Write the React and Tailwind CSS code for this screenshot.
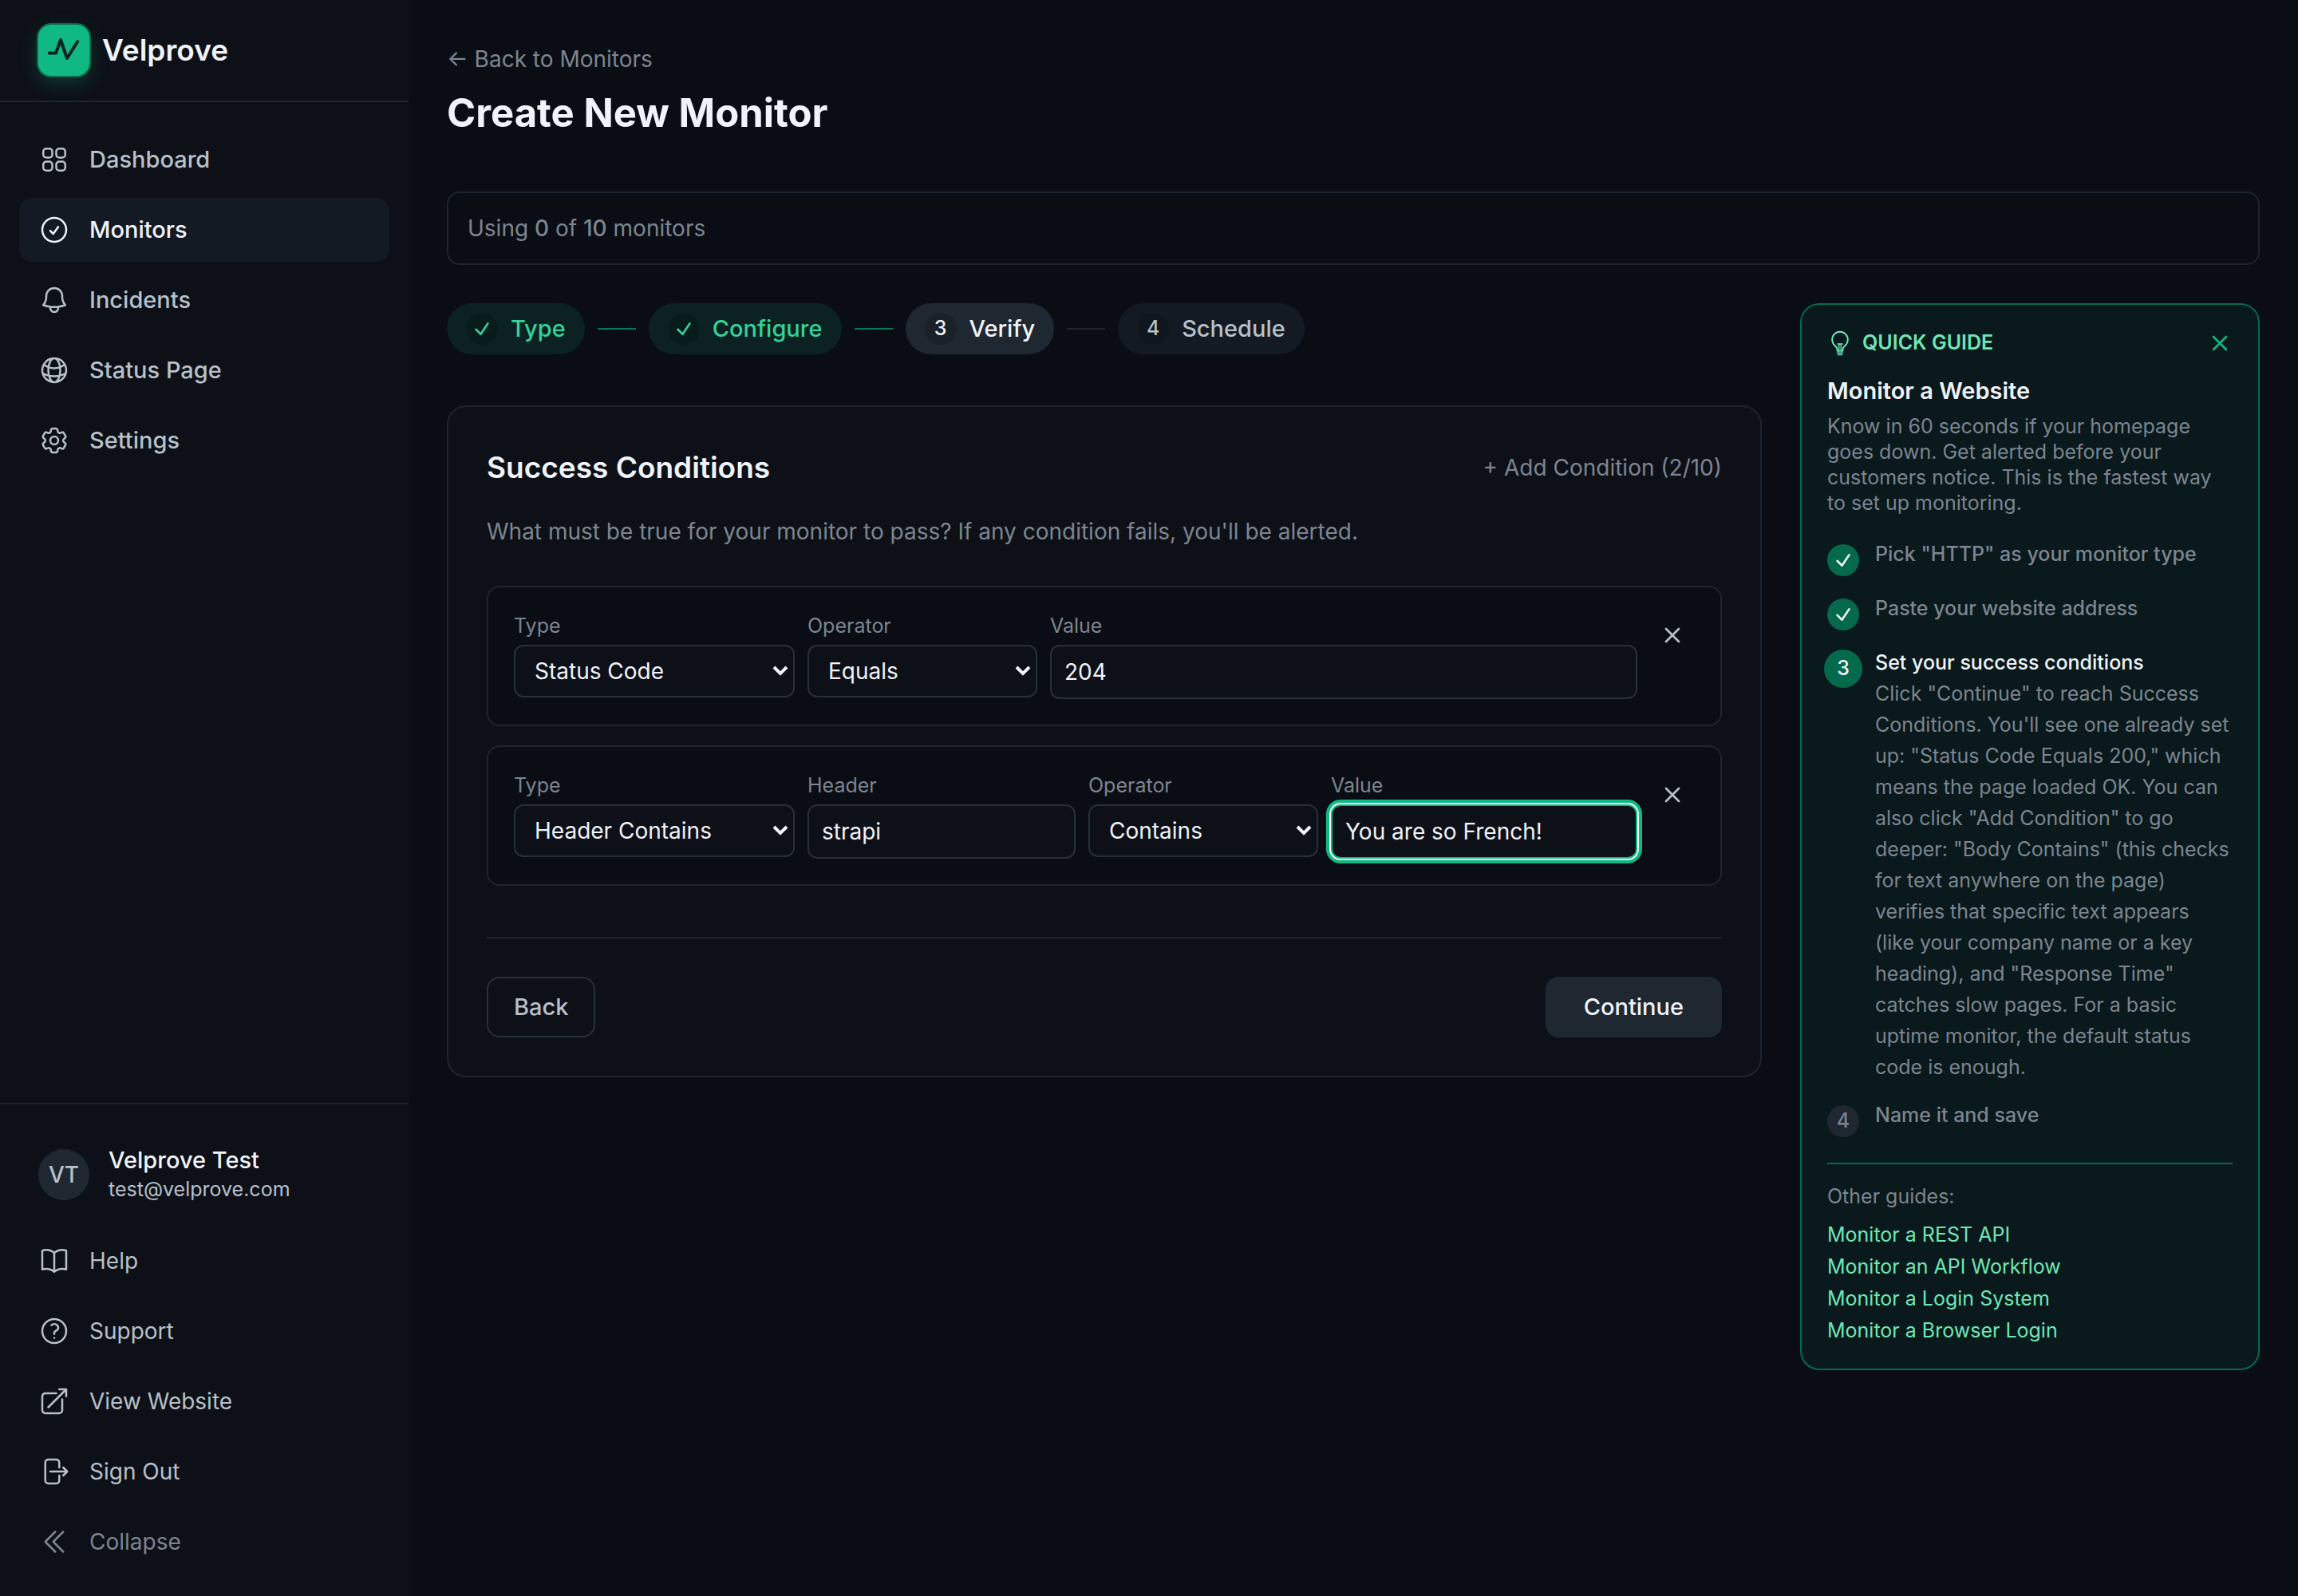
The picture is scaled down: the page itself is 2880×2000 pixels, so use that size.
import {
  HiOutlineSquares2X2, HiOutlineCheckCircle, HiOutlineBell, HiOutlineGlobeAlt, HiOutlineCog6Tooth,
  HiOutlineBookOpen, HiOutlineQuestionMarkCircle, HiOutlineArrowTopRightOnSquare,
  HiOutlineArrowRightOnRectangle, HiOutlineChevronDoubleLeft, HiOutlineXMark,
} from "react-icons/hi2";

const mainNav = [
  { label: "Dashboard", icon: HiOutlineSquares2X2 },
  { label: "Monitors", icon: HiOutlineCheckCircle, active: true },
  { label: "Incidents", icon: HiOutlineBell },
  { label: "Status Page", icon: HiOutlineGlobeAlt },
  { label: "Settings", icon: HiOutlineCog6Tooth },
];

function Check() {
  return (
    <svg viewBox="0 0 24 24" fill="none" stroke="currentColor" strokeWidth="2.5" strokeLinecap="round" strokeLinejoin="round" className="size-6" aria-hidden="true">
      <path d="M4.5 12.75l6 6 9-13.5" />
    </svg>
  );
}

function Bulb() {
  return (
    <svg viewBox="0 0 32 32" fill="none" stroke="currentColor" strokeWidth="2" strokeLinecap="round" strokeLinejoin="round" className="size-8 text-[#6ee7b7]" aria-hidden="true">
      <path d="M12.5 25v-1.5c0-1.6-1.2-3-2.7-4.3a9.8 9.8 0 1 1 12.4 0c-1.5 1.3-2.7 2.7-2.7 4.3V25" />
      <path strokeWidth="1.5" d="M13 17h6M14.7 17v8M17.3 17v8M12.5 26h7M12.5 28.3h7M13.5 30.6h5" />
    </svg>
  );
}

function Sidebar() {
  return (
    <aside className="flex min-h-screen w-[512px] shrink-0 flex-col bg-[#0d1117]">
      <div className="flex h-32 items-center gap-4 border-b-2 border-[#1c2530] px-12">
        <div className="flex size-16 items-center justify-center rounded-2xl bg-[#10b981] shadow-[0_8px_24px_rgba(16,185,129,0.25)] ring-2 ring-[#0a6b50]">
          <svg viewBox="0 0 24 24" fill="none" stroke="#0a2424" strokeWidth="2" strokeLinecap="round" strokeLinejoin="round" className="size-12" aria-hidden="true">
            <path d="M2.9 13.8H7l3-8.3L14 17l6.6-10.400" />
          </svg>
        </div>
        <span className="text-[37px] font-semibold text-[#f0f3f9]">Velprove</span>
      </div>
      <nav className="flex flex-1 flex-col gap-2 px-6 pt-8">
        {mainNav.map(({ label, icon: Icon, active }) => (
          <a key={label} href="#" aria-current={active ? "page" : undefined}
            className={`flex h-20 items-center gap-6 rounded-2xl px-6 text-[29px] font-medium ${active ? "bg-[#131a23] text-[#f0f3f9]" : "text-[#b8c0ca]"}`}>
            <Icon className="size-10" />
            {label}
          </a>
        ))}
      </nav>
      <div className="border-t-2 border-[#1c2530] px-6 py-7">
        <div className="mb-2 flex items-center gap-6 p-6">
          <div className="flex size-16 items-center justify-center rounded-full bg-[#1f2730] text-[28px] font-medium text-[#b8c0ca]">VT</div>
          <div>
            <p className="text-[29px] leading-9 font-medium text-[#f0f3f9]">Velprove Test</p>
            <p className="text-[25px] leading-9 text-[#b8c0ca]">test@velprove.com</p>
          </div>
        </div>
        <div className="flex flex-col gap-2 text-[28px] text-[#b8c0ca]">
          <a href="#" className="flex h-20 items-center gap-6 px-6"><HiOutlineBookOpen className="size-10" />Help</a>
          <a href="#" className="flex h-20 items-center gap-6 px-6"><HiOutlineQuestionMarkCircle className="size-10" />Support</a>
          <a href="#" className="flex h-20 items-center gap-6 px-6"><HiOutlineArrowTopRightOnSquare className="size-10" />View Website</a>
          <button type="button" className="flex h-20 items-center gap-6 px-6"><HiOutlineArrowRightOnRectangle className="size-10" />Sign Out</button>
          <button type="button" className="flex h-20 items-center gap-6 px-6 text-[#7d8590]"><HiOutlineChevronDoubleLeft className="size-10" />Collapse</button>
        </div>
      </div>
    </aside>
  );
}

const stepStyle = {
  done: "bg-[#0b2122] text-[#34d399]",
  current: "bg-[#1f2730] text-[#f0f3f9]",
  todo: "bg-[#131a23] text-[#b8c0ca]",
};

function Step({ n, label, state }) {
  return (
    <li className={`flex h-16 items-center gap-4 rounded-full px-6 text-[29px] font-medium ${stepStyle[state]}`}>
      <span className="flex size-10 items-center justify-center rounded-full bg-black/15 text-[25px]">
        {state === "done" ? <Check /> : n}
      </span>
      {label}
    </li>
  );
}

const fieldBox = "w-full rounded-xl border-2 bg-[#0d1117] text-[28px] text-[#f0f3f9]";

function Field({ id, label, className, children }) {
  return (
    <div className={className}>
      <label htmlFor={id} className="mb-2 block text-[25px] leading-8 text-[#7d8590]">{label}</label>
      {children}
    </div>
  );
}

function SelectField({ id, label, value, className }) {
  return (
    <Field id={id} label={label} className={className}>
      <div className="relative">
        <select id={id} defaultValue={value} className={`${fieldBox} h-[66px] appearance-none border-[#26303a] pr-12 pl-6`}>
          <option>{value}</option>
        </select>
        <svg viewBox="0 0 20 20" fill="none" stroke="#f0f3f9" strokeWidth="4" className="pointer-events-none absolute inset-y-0 right-2 my-auto size-5" aria-hidden="true">
          <path d="M2 5l8 8 8-8" />
        </svg>
      </div>
    </Field>
  );
}

function InputField({ id, label, value, className, focused }) {
  return (
    <Field id={id} label={label} className={className}>
      <input id={id} defaultValue={value}
        className={`${fieldBox} h-[68px] px-4 outline-none ${focused ? "border-[#10b981] shadow-[0_0_0_2px_#f0f3f9,0_0_0_6px_#10b981]" : "border-[#26303a]"}`} />
    </Field>
  );
}

function Condition({ children }) {
  return (
    <div className="flex gap-4 rounded-2xl border-2 border-[#1c2530] bg-[#0a0e14] p-8">
      {children}
      <button type="button" aria-label="Remove condition" className="flex size-14 shrink-0 items-center justify-center text-[#b8c0ca]">
        <HiOutlineXMark strokeWidth={2} className="size-8" />
      </button>
    </div>
  );
}

function GuideStep({ n, title, state, children }) {
  return (
    <li className="flex gap-5">
      <span className={`mt-1 flex size-10 shrink-0 items-center justify-center rounded-full text-[25px] font-medium ${
        state === "todo" ? "bg-[#1f2730] text-[#7d8590]" : "bg-[#056a4c] text-[#f0f3f9]"} ${state === "current" ? "ring-4 ring-[#056a4c]" : ""}`}>
        {state === "done" ? <Check /> : n}
      </span>
      <div className="pb-1 text-[25px] text-[#7d8590]">
        <p className={`leading-8 font-medium ${state === "current" ? "text-[#f0f3f9]" : ""}`}>{title}</p>
        {children}
      </div>
    </li>
  );
}

function QuickGuide() {
  return (
    <aside className="w-[576px] shrink-0 rounded-3xl border-2 border-[#056a4c] bg-[#09191c] p-8">
      <div className="mb-6 flex h-8 items-center gap-3">
        <Bulb />
        <h2 className="flex-1 text-[25px] font-semibold text-[#6ee7b7]">QUICK GUIDE</h2>
        <button type="button" aria-label="Close guide" className="text-[#10b981]"><HiOutlineXMark strokeWidth={2} className="size-8" /></button>
      </div>
      <h3 className="mb-2 text-[29px] leading-10 font-semibold text-[#f0f3f9]">Monitor a Website</h3>
      <p className="mb-8 pr-3 text-[25px] leading-8 text-[#7d8590]">
        Know in 60 seconds if your homepage goes down. Get alerted before your customers notice. This is the fastest way to set up monitoring.
      </p>
      <ol className="flex flex-col gap-6">
        <GuideStep state="done" title={'Pick "HTTP" as your monitor type'} />
        <GuideStep state="done" title="Paste your website address" />
        <GuideStep n={3} state="current" title="Set your success conditions">
          <p className="mt-1 -mb-1 leading-[39px]">
            Click "Continue" to reach Success Conditions. You'll see one already set up: "Status Code Equals 200," which means the page loaded OK. You can also click "Add Condition" to go deeper: "Body Contains" (this checks for text anywhere on the page) verifies that specific text appears (like&nbsp;your company name or a key heading), and "Response Time" catches slow pages. For a basic uptime monitor, the default status code is enough.
          </p>
        </GuideStep>
        <GuideStep n={4} state="todo" title="Name it and save" />
      </ol>
      <div className="mt-8 border-t-2 border-[#056a4c] pt-6 text-[25px] leading-8">
        <p className="mb-4 text-[#7d8590]">Other guides:</p>
        <ul className="flex flex-col gap-2 text-[#6ee7b7]">
          <li><a href="#">Monitor a REST API</a></li>
          <li><a href="#">Monitor an API Workflow</a></li>
          <li><a href="#">Monitor a Login System</a></li>
          <li><a href="#">Monitor a Browser Login</a></li>
        </ul>
      </div>
    </aside>
  );
}

export default function App() {
  return (
    <div className="flex min-h-screen bg-[#0a0e14] font-['Inter',sans-serif]">
      <Sidebar />
      <main className="min-w-0 flex-1 px-12 pt-14">
        <a href="#" className="block text-[28px] leading-9 text-[#7d8590]">← Back to Monitors</a>
        <h1 className="mt-4 mb-16 text-[49px] leading-[68px] font-bold text-[#f0f3f9]">Create New Monitor</h1>
        <div className="mb-12 rounded-2xl border-2 border-[#1c2530] p-6 text-[28px] leading-10 text-[#7d8590]">
          Using <span className="font-medium">0</span> of <span className="font-medium">10</span> monitors
        </div>
        <div className="flex items-start gap-12">
          <div className="min-w-0 flex-1">
            <ol className="mb-16 flex items-center gap-4">
              <Step label="Type" state="done" />
              <li aria-hidden="true" className="h-0.5 w-12 bg-[#047857]" />
              <Step label="Configure" state="done" />
              <li aria-hidden="true" className="h-0.5 w-12 bg-[#047857]" />
              <Step n={3} label="Verify" state="current" />
              <li aria-hidden="true" className="h-0.5 w-12 bg-[#1c2530]" />
              <Step n={4} label="Schedule" state="todo" />
            </ol>
            <section className="rounded-3xl border-2 border-[#1c2530] bg-[#0d1117] p-12">
              <div className="mb-8 flex items-center justify-between">
                <h2 className="text-[37px] leading-[56px] font-semibold text-[#f0f3f9]">Success Conditions</h2>
                <button type="button" className="text-[28px] text-[#7d8590]">+ Add Condition (2/10)</button>
              </div>
              <p className="mb-12 text-[28px] leading-10 text-[#7d8590]">
                What must be true for your monitor to pass? If any condition fails, you'll be alerted.
              </p>
              <div className="flex flex-col gap-6">
                <Condition>
                  <SelectField id="type-1" label="Type" value="Status Code" className="w-[352px]" />
                  <SelectField id="operator-1" label="Operator" value="Equals" className="w-72" />
                  <InputField id="value-1" label="Value" value="204" className="flex-1" />
                </Condition>
                <Condition>
                  <SelectField id="type-2" label="Type" value="Header Contains" className="w-[352px]" />
                  <InputField id="header-2" label="Header" value="strapi" className="w-[336px]" />
                  <SelectField id="operator-2" label="Operator" value="Contains" className="w-72" />
                  <InputField id="value-2" label="Value" value="You are so French!" className="flex-1" focused />
                </Condition>
              </div>
              <div className="mt-16 flex justify-between border-t-2 border-[#1c2530] pt-12 text-[29px] font-medium">
                <button type="button" className="h-[76px] rounded-2xl border-2 border-[#26303a] px-8 text-[#b8c0ca]">Back</button>
                <button type="button" className="h-[76px] rounded-2xl bg-[#1f2730] px-12 text-[#f0f3f9]">Continue</button>
              </div>
            </section>
          </div>
          <QuickGuide />
        </div>
      </main>
    </div>
  );
}
